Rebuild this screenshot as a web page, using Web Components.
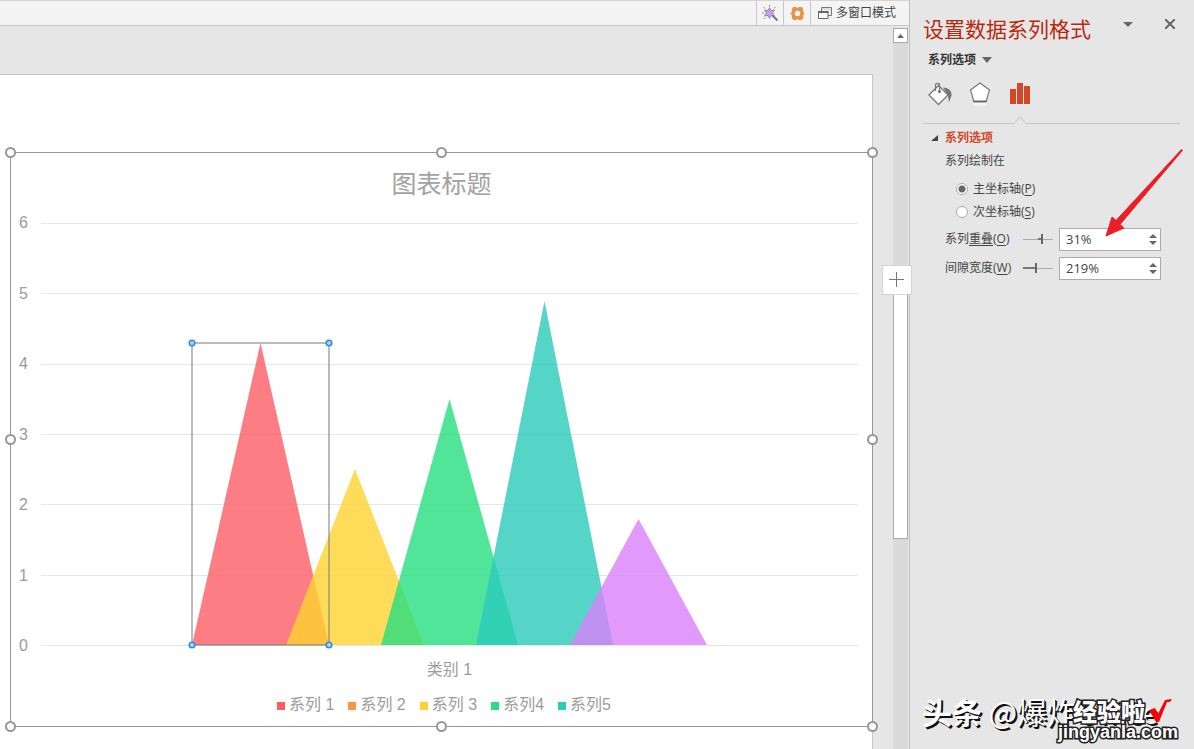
<!DOCTYPE html>
<html lang="zh-CN">
<head>
<meta charset="utf-8">
<title>设置数据系列格式</title>
<style>
html, body { margin: 0; height: 100%; }
body { background: #e6e6e6; color: #444; font: 12px/20px "Open Sans", "Noto Sans CJK SC", sans-serif; overflow: hidden; }
</style>
</head>
<body>
<office-app></office-app>
<script>
const define = (name, html, setup) => {
  const template = document.createElement('template');
  template.innerHTML = `<style>*{box-sizing:border-box}button{margin:0;padding:0;border:0;background:none;font:inherit;color:inherit}svg{display:block}</style>` + html;
  customElements.define(name, class extends HTMLElement {
    constructor() {
      super();
      this.attachShadow({ mode: 'open' }).append(template.content.cloneNode(true));
    }
    connectedCallback() { if (setup) setup(this, this.shadowRoot); }
  });
};

define('window-toolbar', `
<style>
:host { display: flex; justify-content: flex-end; height: 26px; background: #f4f4f4; border-top: 1px solid #d4d4d4; border-bottom: 1px solid #c8c8c8; box-sizing: border-box; }
button { display: flex; align-items: center; justify-content: center; width: 27px; border-left: 1px solid #c8c8c8; }
.mode { width: 99px; gap: 4px; justify-content: flex-start; padding-left: 7px; white-space: nowrap; }
</style>
<button aria-label="魔棒"><svg width="17" height="17" viewBox="0 0 17 17"><path d="M10 10l5.500 5.500" stroke="#777" stroke-width="2"/><path d="M7.500 2.500l1.500 3 3.500-.5-2 3 2 3-3.500-.5-1.500 3-1.500-3-3.500.5 2-3-2-3L6 5.500z" fill="#c3a1ec" stroke="#8a7a9c" stroke-width=".8"/><path d="M7.500 0v1.500M1.500 2l1.500 1.500M13.500 2L12 3.500M0 8h2M1.500 14L3 12.500" stroke="#888"/></svg></button>
<button aria-label="设置"><svg width="15" height="15" viewBox="0 0 15 15"><path fill="#e8924a" fill-rule="evenodd" d="M3 1h3l1.500 1L9 1h3l1.300 2.600-.2 1.900L14.500 7.500l-1.400 2 .2 1.900L12 14H9l-1.500-1L6 14H3l-1.300-2.600.2-1.900L.5 7.500l1.400-2-.2-1.900zM7.500 4.700a2.800 2.800 0 1 0 .01 0z"/></svg></button>
<button class="mode"><svg width="14" height="13" viewBox="0 0 14 13"><path d="M3.500 4V.5h10v8H10" fill="none" stroke="#777"/><path d="M4 2h9" stroke="#ddd" stroke-width="2"/><path d="M.5 4.500h9.500v7H.5z" fill="#fff" stroke="#666"/><path d="M0 5h10.500" stroke="#666" stroke-width="2"/></svg><span>多窗口模式</span></button>`);

define('scroll-rail', `
<style>
:host { display: grid; grid-template-rows: 15px 251fr 244fr 210fr; width: 15px; background: #dadada; }
.up { display: flex; align-items: center; justify-content: center; border: 1px solid #aaa; background: #fff; }
.thumb { grid-row: 3; background: #fff; border: 1px solid #aaa; }
</style>
<button class="up" aria-label="向上滚动"><svg width="7" height="4"><path d="M0 4l3.500-4L7 4z" fill="#666"/></svg></button>
<div class="thumb"></div>`);

define('chart-legend', `
<style>
:host { display: flex; justify-content: center; gap: 14px; padding-left: 5px; }
span { display: flex; align-items: center; gap: 4px; white-space: nowrap; }
i { width: 8px; height: 8px; margin-top: 2px; }
</style>`, (host, root) => {
  [['系列 1', '#fd5c65'], ['系列 2', '#fd9644'], ['系列 3', '#fed330'], ['系列4', '#26de81'], ['系列5', '#2bcbba']].forEach(([name, color]) => {
    const item = document.createElement('span');
    const key = document.createElement('i');
    key.style.background = color;
    item.append(key, name);
    root.append(item);
  });
});

define('chart-plot', `
<style>
:host { display: grid; grid-template-columns: 17px 1fr; column-gap: 13px; padding: 0 14px 0 0; }
.axis { display: flex; flex-direction: column; justify-content: space-between; margin: -10px 0; text-align: right; line-height: 20px; }
.area { display: grid; }
.lines, svg { grid-area: 1 / 1; width: 100%; height: 100%; }
.lines { display: flex; flex-direction: column; justify-content: space-between; }
.lines i { height: 1px; background: #e6e6e6; }
svg { overflow: visible; }
</style>
<div class="axis"><span>6</span><span>5</span><span>4</span><span>3</span><span>2</span><span>1</span><span>0</span></div>
<div class="area">
<div class="lines"><i></i><i></i><i></i><i></i><i></i><i></i><i></i></div>
<svg viewBox="0 0 817 423" preserveAspectRatio="none">
<g fill-opacity=".8">
<path d="M151 422L219.500 120 288 422z" fill="#fd5c65"/>
<path d="M245 422L314 246 383 422z" fill="#fed330"/>
<path d="M340 422L408.500 176 477 422z" fill="#26de81"/>
<path d="M435 422L503.500 78 572 422z" fill="#2bcbba"/>
<path d="M529 422L597.500 296 666 422z" fill="#d980fa"/>
</g>
<path d="M151 120H288V422H151z" fill="none" stroke="#777" stroke-opacity=".5" stroke-width="2"/>
<g fill="#a9d3f5" stroke="#2b8be0" stroke-width="1.500"><circle cx="151" cy="120" r="2.800"/><circle cx="288" cy="120" r="2.800"/><circle cx="151" cy="422" r="2.800"/><circle cx="288" cy="422" r="2.800"/></g>
</svg></div>`);

define('chart-frame', `
<style>
:host { display: grid; grid-template-rows: 36px 1fr 20px 35px; position: relative; border: 1px solid #969696; padding: 13px 0 11px; color: #9b9b9b; font: 16px/20px "Liberation Sans", "Noto Sans CJK SC", sans-serif; box-sizing: border-box; }
h2 { margin: 0; text-align: center; font-size: 25px; font-weight: 400; line-height: 36px; color: #a2a2a2; }
chart-plot { margin: 21px 0 14px; }
.category { text-align: center; padding-left: 16px; }
chart-legend { margin-top: 15px; }
.h { position: absolute; width: 11px; height: 11px; border: 2px solid #969696; border-radius: 50%; background: #fff; }
.l { left: -6px; } .c { left: calc(50% - 6px); } .r { right: -6px; }
.t { top: -6px; } .m { top: calc(50% - 6px); } .b { bottom: -6px; }
</style>
<h2>图表标题</h2>
<chart-plot></chart-plot>
<div class="category">类别 1</div>
<chart-legend></chart-legend>
<i class="h l t"></i><i class="h c t"></i><i class="h r t"></i><i class="h l m"></i><i class="h r m"></i><i class="h l b"></i><i class="h c b"></i><i class="h r b"></i>`);

define('slide-canvas', `
<style>
:host { display: flex; min-width: 0; }
.slide { flex: 1; display: grid; margin: 48px 20px 0 0; padding: 77px 0 22px 10px; background: #fff; border: solid #c6c6c6; border-width: 1px 1px 0 0; }
chart-frame { margin-right: -1px; }
</style>
<div class="slide"><chart-frame></chart-frame></div>`);

define('slide-workspace', `
<style>
:host { display: flex; flex-direction: column; min-width: 0; position: relative; }
.body { flex: 1; display: grid; grid-template-columns: 1fr 15px; padding-right: 1px; }
scroll-rail { margin-top: 2px; }
.add { position: absolute; right: -3px; top: 265px; width: 30px; height: 30px; display: grid; place-items: center; background: #fff; border: 1px solid #d5d5d5; }
</style>
<window-toolbar></window-toolbar>
<div class="body"><slide-canvas></slide-canvas><scroll-rail></scroll-rail></div>
<button class="add" aria-label="图表元素"><svg width="16" height="16"><path d="M7.500 0v15M0 7.500h15" stroke="#777"/></svg></button>`);

define('axis-option', `
<style>
:host { display: block; }
label { display: flex; align-items: center; gap: 5px; }
input { appearance: none; margin: 0; width: 12px; height: 12px; border: 1px solid #ababab; border-radius: 50%; background: #fff; }
input:checked { background: radial-gradient(circle, #666 0 3px, #fff 4px); }
</style>
<label><input type="radio"><span><slot></slot></span></label>`, (host, root) => {
  root.querySelector('input').checked = host.hasAttribute('checked');
});

define('percent-field', `
<style>
:host { display: grid; grid-template-columns: 78px 30px 108px; align-items: center; height: 23px; }
label { white-space: nowrap; padding-bottom: 2px; }
input { margin: 0; font: inherit; color: inherit; outline: 0; }
.range { appearance: none; width: 30px; height: 10px; margin-bottom: 2px; background: linear-gradient(#777, #777) var(--from) 4px / var(--bar) 2px no-repeat, linear-gradient(#aaa, #aaa) 0 5px / 100% 1px no-repeat; }
.range::-webkit-slider-thumb { appearance: none; width: 2px; height: 10px; background: #666; }
.box { display: flex; height: 23px; margin-left: 6px; width: 102px; background: #fff; border: 1px solid #ababab; }
.text { flex: 1; min-width: 0; border: 0; padding: 0 0 2px 6px; background: none; font-size: 13px; }
.spin { width: 14px; display: grid; grid-template-rows: 1fr 1fr; padding: 3px 0; }
.spin button { display: grid; place-items: center; }
</style>
<label for="v"><slot></slot></label>
<input class="range" type="range">
<div class="box"><input class="text" id="v" type="text"><div class="spin"><button aria-label="增加"><svg width="8" height="4"><path d="M0 4l4-4 4 4z" fill="#666"/></svg></button><button aria-label="减少"><svg width="8" height="4"><path d="M0 0l4 4 4-4z" fill="#666"/></svg></button></div></div>`, (host, root) => {
  const range = root.querySelector('.range');
  range.min = host.getAttribute('min');
  range.max = host.getAttribute('max');
  range.value = host.getAttribute('value');
  range.setAttribute('aria-label', host.textContent);
  root.querySelector('.text').value = host.getAttribute('value') + '%';
  root.querySelector('.text').setAttribute('aria-label', host.textContent);
});

define('format-panel', `
<style>
:host { display: block; border-left: 1px solid #c0c0c0; padding: 15px 14px 0 13px; box-sizing: border-box; }
header { display: flex; height: 28px; }
h1 { flex: 1; margin: 0; font-size: 21px; line-height: 28px; font-weight: 400; color: #b7290f; white-space: nowrap; }
.tools { display: flex; align-items: center; gap: 32px; height: 18px; padding-right: 5px; }
.menu { display: flex; align-items: center; gap: 6px; margin: 7px 0 0 5px; height: 20px; font-weight: 700; color: #333; }
.tabs { display: flex; gap: 12px; margin: 10px 0 0 3px; }
.tabs button { width: 28px; height: 28px; display: grid; place-items: center; }
.rule { display: flex; height: 8px; margin-top: 8px; }
.rule i { border-bottom: 1px solid #c6c6c6; width: 90px; }
.rule i:last-child { flex: 1; }
section { padding-left: 22px; }
h3 { display: flex; align-items: center; gap: 7px; margin: 4px 0 0 -14px; font-size: 12px; line-height: 20px; color: #d24726; }
p { margin: 3px 0 0; }
.radios { display: grid; gap: 3px; margin: 8px 0 0 11px; }
.fields { display: grid; gap: 6px; margin-top: 6px; }
u { text-underline-offset: 2px; }
</style>
<header><h1>设置数据系列格式</h1><div class="tools"><button aria-label="任务窗格选项"><svg width="10" height="5"><path d="M0 0h10L5 5z" fill="#666"/></svg></button><button aria-label="关闭"><svg width="10" height="10"><path d="M0 0l10 10M10 0L0 10" stroke="#666" stroke-width="2"/></svg></button></div></header>
<button class="menu">系列选项<svg width="10" height="6"><path d="M0 0h10L5 6z" fill="#666"/></svg></button>
<div class="tabs">
<button aria-label="填充与线条"><svg width="26" height="24" viewBox="0 0 26 24"><path d="M16 5.500c6 0 9 4 8.500 8L22 20.500l-1-7z" fill="#777"/><path d="M2 13L11.500 3.500 21 13l-9.500 9.500z" fill="#fff" stroke="#777" stroke-width="1.300"/><path d="M8.500 9V3q0-1.700 2-1.700t2 1.700v6" fill="none" stroke="#777" stroke-width="1.200"/><circle cx="12.500" cy="9.500" r="1.500" fill="#666"/></svg></button>
<button aria-label="效果"><svg width="22" height="26" viewBox="0 0 22 26"><defs><linearGradient id="g" x2="0" y2="1"><stop stop-color="#fff"/><stop offset="1" stop-color="#e6e6e6"/></linearGradient></defs><path d="M4 21h14v5H4z" fill="url(#g)"/><path d="M11 2l9.500 7-3.300 11.500H4.800L1.500 9z" fill="#fff" stroke="#777" stroke-width="1.200"/><path d="M4.500 20.500h13" stroke="#666" stroke-width="2"/></svg></button>
<button aria-label="系列选项"><svg width="20" height="22"><path d="M0 6h6v15H0zM7 0h6v21H7zM14 3h6v18h-6z" fill="#d24726"/></svg></button>
</div>
<div class="rule"><i></i><svg width="14" height="8"><path d="M0 7.500h1L7 .5l6 7h1" fill="none" stroke="#c6c6c6"/></svg><i></i></div>
<section>
<h3><svg width="7" height="6"><path d="M7 0v6H0z" fill="#444"/></svg>系列选项</h3>
<p>系列绘制在</p>
<div class="radios"><axis-option checked>主坐标轴(<u>P</u>)</axis-option><axis-option>次坐标轴(<u>S</u>)</axis-option></div>
<div class="fields">
<percent-field min="-100" max="100" value="31" style="--from:15px;--bar:5px">系列<u>重叠</u>(<u>O</u>)</percent-field>
<percent-field min="0" max="500" value="219" style="--from:0px;--bar:14px">间隙宽度(<u>W</u>)</percent-field>
</div>
</section>`);

define('pointer-arrow', `
<style>:host { position: absolute; right: 10px; top: 148px; pointer-events: none; }</style>
<svg width="80" height="90"><path d="M2 88L8 69l4 3.500L77.500 1.500l1 .8L16 76.500l4 3.500z" fill="#ee1c25" stroke="#ee1c25" stroke-linejoin="round"/></svg>`);

define('page-watermark', `
<style>
:host { position: absolute; right: 0; bottom: 0; width: 272px; height: 60px; pointer-events: none; color: #fff; white-space: nowrap; }
.author { font: 30px/44px "Noto Sans CJK SC", sans-serif; text-shadow: 1px 1px #111, 2px 2px #111; }
.site { position: absolute; right: 16px; bottom: 8px; font-weight: 900; -webkit-text-stroke: 3px #222; paint-order: stroke fill; }
.name { display: flex; align-items: center; justify-content: flex-end; gap: 4px; padding-right: 5px; font: 900 24px/20px "Noto Sans CJK SC", sans-serif; }
.domain { font: 700 18px/18px "Liberation Sans", sans-serif; }
</style>
<div class="author"><b>头条</b> @爆炸Office</div>
<div class="site"><div class="name"><span>经验啦</span><svg width="24" height="24"><path d="M0 11l6-2 3 6L16 1l7-1-2 3h-3L10 23H7z" fill="#f00"/></svg></div><div class="domain">jingyanla.com</div></div>`);

define('office-app', `
<style>
:host { display: grid; grid-template-columns: 1fr 285px; min-height: 100vh; position: relative; }
slide-workspace { z-index: 1; }
pointer-arrow, page-watermark { z-index: 2; }
</style>
<slide-workspace></slide-workspace>
<format-panel></format-panel>
<pointer-arrow></pointer-arrow>
<page-watermark></page-watermark>`);
</script>
</body>
</html>
